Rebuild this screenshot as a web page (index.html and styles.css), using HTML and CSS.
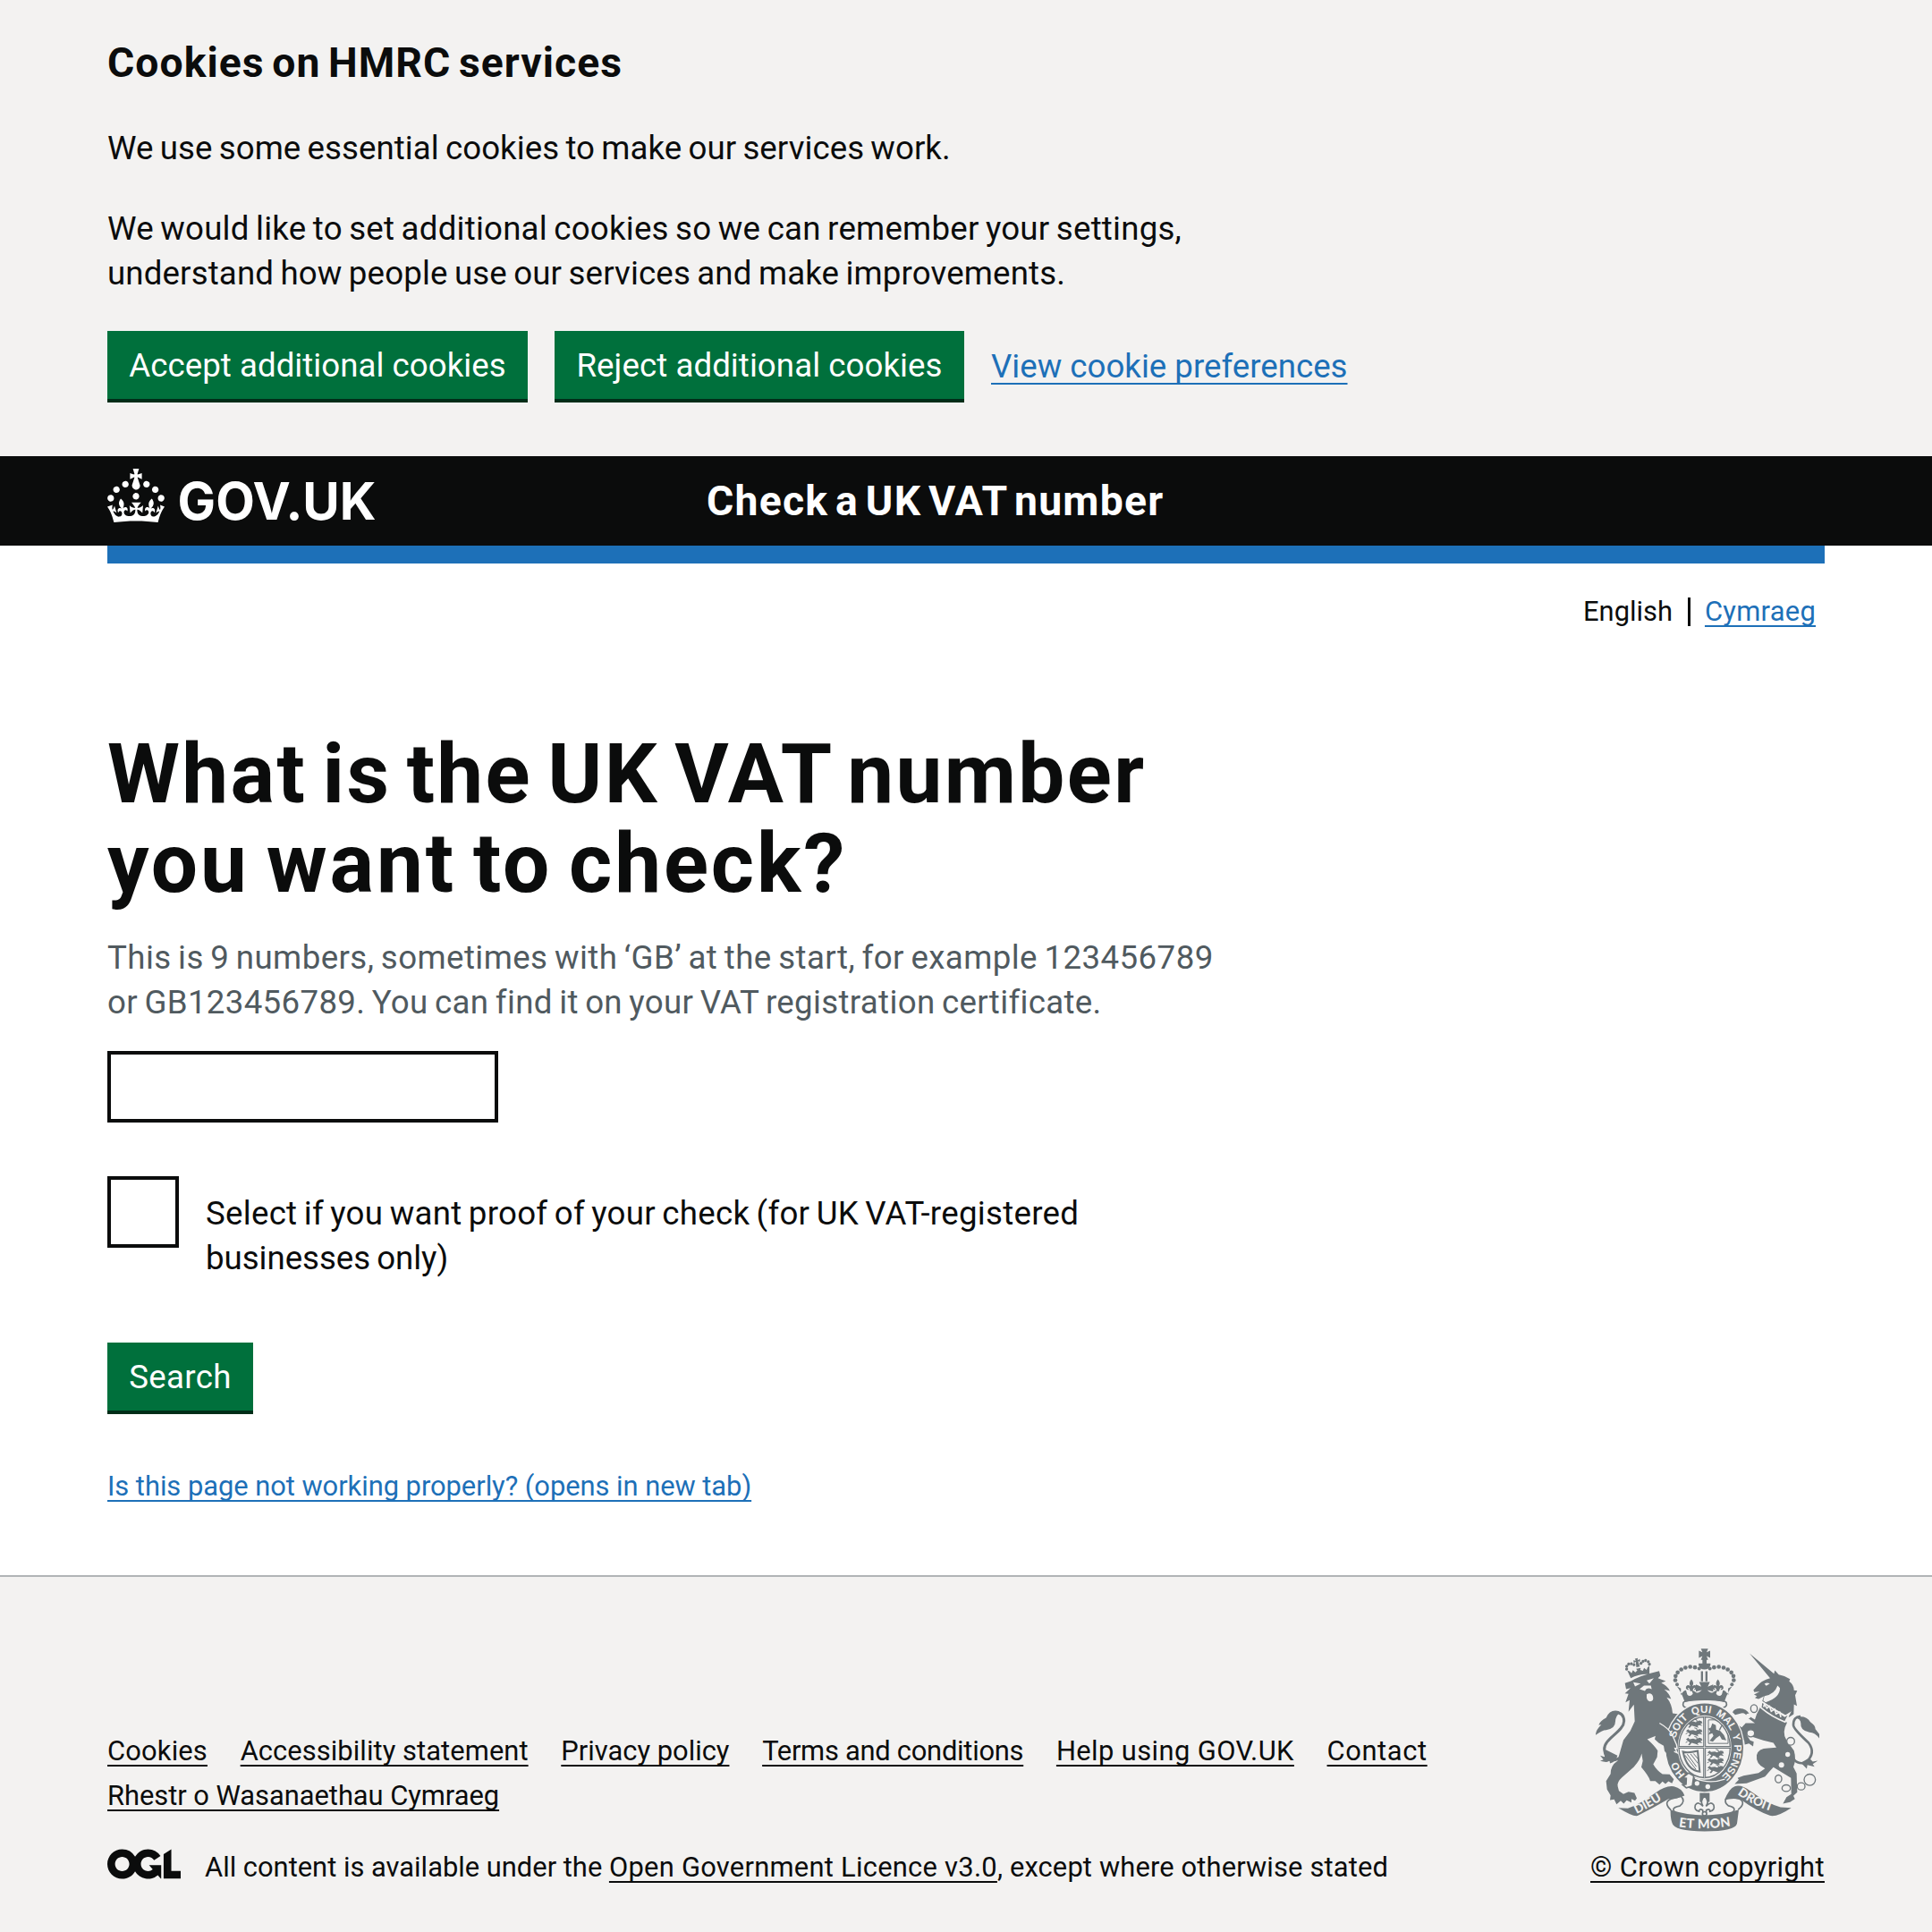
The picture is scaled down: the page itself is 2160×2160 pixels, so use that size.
FILE: index.html
```html
<!DOCTYPE html>
<html lang="en">
<head>
<meta charset="utf-8">
<title>What is the UK VAT number you want to check?</title>
<link rel="stylesheet" href="styles.css">
</head>
<body>
<section class="cookie-banner">
  <div class="container">
    <h2 class="cookie-title">Cookies on HMRC services</h2>
    <p class="cookie-text essential">We use some essential cookies to make our services work.</p>
    <p class="cookie-text">We would like to set additional cookies so we can remember your settings,<br><span class="cookie-two">understand how people use our services and make improvements.</span></p>
    <div class="button-group">
      <button class="button accept">Accept additional cookies</button>
      <button class="button reject">Reject additional cookies</button>
      <a class="link large" href="#">View cookie preferences</a>
    </div>
  </div>
</section>
<header class="header">
  <div class="container header-row">
    <svg class="logo" viewBox="0 0 150 30" role="img" aria-label="GOV.UK">
      <path fill="#fff" d="M22.6 10.4c-1 .4-2-.1-2.4-1-.4-.9.1-2 1-2.4.9-.4 2 .1 2.4 1s-.1 2-1 2.4m-5.9 6.7c-.9.4-2-.1-2.4-1-.4-.9.1-2 1-2.4.9-.4 2 .1 2.4 1s-.1 2-1 2.4m10.8-3.7c-1 .4-2-.1-2.4-1-.4-.9.1-2 1-2.4.9-.4 2 .1 2.4 1s0 2-1 2.4m3.3 4.8c-1 .4-2-.1-2.4-1-.4-.9.1-2 1-2.4.9-.4 2 .1 2.4 1s-.1 2-1 2.4M17 4.7l2.3 1.2V2.5l-2.3.7-.2-.2.9-3h-3.4l.9 3-.2.2c-.1.1-2.3-.7-2.3-.7v3.4L15 4.7c.1.1.1.2.2.2l-1.3 4c-.1.2-.1.4-.1.6 0 1.1.8 2 1.9 2.2h.7c1-.2 1.9-1.1 1.9-2.1 0-.2 0-.4-.1-.6l-1.3-4c-.1-.2 0-.2.1-.3m-7.6 5.7c.9.4 2-.1 2.4-1 .4-.9-.1-2-1-2.4-.9-.4-2 .1-2.4 1s0 2 1 2.4m-5 3c.9.4 2-.1 2.4-1 .4-.9-.1-2-1-2.4-.9-.4-2 .1-2.4 1s.1 2 1 2.4m-3.2 4.8c.9.4 2-.1 2.4-1 .4-.9-.1-2-1-2.4-.9-.4-2 .1-2.4 1s0 2 1 2.4m14.8 11c4.4 0 8.6.3 12.3.8 1.1-4.5 2.4-7 3.7-8.8l-2.5-.9c.2 1.3.3 1.9 0 2.7-.4-.4-.8-1.1-1.1-2.3l-1.2 4c.7-.5 1.3-.8 2-.9-1.1 2.5-2.6 3.1-3.5 3-1.1-.2-1.7-1.2-1.5-2.1.3-1.2 1.5-1.5 2.1-.1 1.1-2.3-.8-3-2-2.3 1.9-1.9 2.1-3.5.6-5.6-2.1 1.6-2.1 3.2-1.2 5.5-1.2-1.4-3.2-.6-2.5 1.6.9-1.4 2.1-.5 1.9.8-.2 1.1-1.7 2.1-3.5 1.9-2.7-.2-2.9-2.1-2.9-3.6.7-.1 1.9.5 2.9 1.9l.4-4.3c-1.1 1.1-2.1 1.4-3.2 1.4.4-1.2 2.1-3 2.1-3h-5.4s1.7 1.9 2.1 3c-1.1 0-2.1-.2-3.2-1.4l.4 4.3c1-1.4 2.2-2 2.9-1.9-.1 1.5-.2 3.4-2.9 3.6-1.9.2-3.4-.8-3.5-1.9-.2-1.3 1-2.2 1.9-.8.7-2.3-1.2-3-2.5-1.6.9-2.2.9-3.9-1.2-5.5-1.5 2-1.3 3.7.6 5.6-1.2-.7-3.1 0-2 2.3.6-1.4 1.8-1.1 2.1.1.2.9-.3 1.9-1.5 2.1-.9.2-2.4-.5-3.5-3 .6 0 1.2.3 2 .9l-1.2-4c-.3 1.1-.7 1.9-1.1 2.3-.3-.8-.2-1.4 0-2.7l-2.9.9C1.3 23 2.6 25.5 3.7 30c3.7-.5 7.9-.8 12.3-.8"/>
      <text class="wordmark" x="39.3" y="28.4" textLength="111" lengthAdjust="spacingAndGlyphs">GOV.UK</text>
    </svg>
    <span class="service-name">Check a UK VAT number</span>
  </div>
</header>
<div class="container"><div class="blue-bar"></div></div>
<main class="container main">
  <nav class="languages"><span class="english">English</span><a class="link cymraeg" href="#">Cymraeg</a></nav>
  <h1 class="heading"><span class="line-one">What is the UK VAT number</span><br><span class="line-two">you want to check?</span></h1>
  <p class="hint">This is 9 numbers, sometimes with ‘GB’ at the start, for example 123456789<br><span class="hint-two">or GB123456789. You can find it on your VAT registration certificate.</span></p>
  <input class="vat-input" type="text" aria-label="UK VAT number">
  <label class="check-row">
    <input class="checkbox" type="checkbox">
    <span class="check-label">Select if you want proof of your check (for UK VAT-registered<br><span class="label-two">businesses only)</span></span>
  </label>
  <button class="button search">Search</button>
  <a class="link problem" href="#">Is this page not working properly? (opens in new tab)</a>
</main>
<footer class="footer">
  <div class="container footer-row">
    <div class="footer-main">
      <nav class="footer-links">
        <a class="w1" href="#">Cookies</a><a class="w2" href="#">Accessibility statement</a><a class="w3" href="#">Privacy policy</a><a class="w4" href="#">Terms and conditions</a><a class="w5" href="#">Help using GOV.UK</a><a class="w6" href="#">Contact</a><a class="w7" href="#">Rhestr o Wasanaethau Cymraeg</a>
      </nav>
      <div class="licence">
        <svg class="ogl" viewBox="0 0 483.2 195.7" aria-hidden="true"><path fill="#0b0c0c" d="M421.5 142.8V.1l-50.7 32.3v161.1h112.4v-50.7zm-122.3-9.6A47.12 47.12 0 0 1 221 97.8c0-26 21.1-47.1 47.1-47.1 16.7 0 31.4 8.7 39.7 21.8l42.7-27.2A97.63 97.63 0 0 0 268.1 0c-36.5 0-68.3 20.1-85.1 49.7A98 98 0 0 0 97.8 0C43.9 0 0 43.9 0 97.8s43.9 97.8 97.8 97.8c36.5 0 68.3-20.1 85.1-49.7a97.76 97.76 0 0 0 149.6 25.4l19.4 22.2h3v-87.8h-80l24.3 27.5zM97.8 145c-26 0-47.1-21.1-47.1-47.1s21.1-47.1 47.1-47.1 47.1 21.1 47.1 47.1S123.8 145 97.8 145"/></svg>
        <span class="licence-text">All content is available under the <a class="ogl-link" href="#">Open Government Licence v3.0</a><span class="tail">, except where otherwise stated</span></span>
      </div>
    </div>
    <div class="copyright">
      <svg class="arms" viewBox="72 68 750 614" aria-hidden="true">
        <defs>
          <path id="garter" d="M437 517C382 517 337 465 337 400S382 283 437 283 537 335 537 400 492 517 437 517"/>
          <path id="dieu" d="M209 622Q266 595 322 557"/>
          <path id="etmon" d="M350 665Q437 678 530 662"/>
          <path id="droit" d="M547 556Q607 600 684 620"/>
          <g id="fleur"><path d="M0-19Q11-7 3 4 14-4 18 6q3 10-9 11 0-5 4-7-7-3-9 11h-8q-2-14-9-11 4 2 4 7-12-1-9-11 4-10 15-2-8-11 3-23Z"/></g>
          <g id="passant"><path d="M1 8 8 2 13 7 25 5 34 8 45 2 53 4 56 11 49 13 56 20 45 18 39 21 44 27 33 23 20 19 13 27 8 25 14 18 7 13Z"/><path d="M38 8 37 0 29-2M6 15 0 18" fill="none" stroke="#6f777b" stroke-width="3"/></g>
          <clipPath id="shield"><ellipse cx="437" cy="399" rx="88" ry="103"/></clipPath>
        </defs>
        <g fill="#6f777b">
          <!-- royal crown -->
          <path d="M425 68h24l-5 12 12-5v24l-12-6 5 13h-24l5-13-12 6V75l12 5zM430 103h14v15h13v5q-4 15-20 15t-20-15v-5h13z"/>
          <path d="M425 144h7v34h-7zM440 144h7v34h-7z"/>
          <path d="M344 194L358 202 357 224Q367 208 375 208L379 222Q388 232 398 220L394 206 405 212Q412 220 422 212L428 207 408 212 408 188 426 196 419 180H455L448 196 466 188V212L446 207 452 212Q462 220 469 212L480 206 476 220Q486 232 495 222L499 208Q507 208 517 224L516 202 530 194Q514 214 504 245L510 248Q437 234 364 248L370 245Q360 214 344 194Z"/>
          <use href="#fleur" x="393" y="190"/><use href="#fleur" x="482" y="190"/>
          <circle cx="419" cy="135" r="6"/><circle cx="405" cy="131" r="7"/><circle cx="389" cy="129" r="7"/><circle cx="373" cy="132" r="7"/><circle cx="359" cy="138" r="7"/><circle cx="347" cy="148" r="7"/><circle cx="340" cy="160" r="7"/><circle cx="339" cy="174" r="7"/><circle cx="345" cy="188" r="6"/>
          <circle cx="455" cy="135" r="6"/><circle cx="469" cy="131" r="7"/><circle cx="485" cy="129" r="7"/><circle cx="501" cy="132" r="7"/><circle cx="515" cy="138" r="7"/><circle cx="527" cy="148" r="7"/><circle cx="534" cy="160" r="7"/><circle cx="535" cy="174" r="7"/><circle cx="529" cy="188" r="6"/>
          <path d="M378 267q-17-3-12-18 4-9 71-10t73 10q5 14-12 18" fill="none" stroke="#6f777b" stroke-width="5"/>
          <!-- lion -->
          <g transform="translate(219 152) rotate(-12)">
            <path d="M-32 9-38-19-30-14-26-7-19-16-13-7-5-12-8-18H8l-3 6 8 5 6-9 7 9 4-7 8-5-6 28Q0-1-32 9ZM-5-52H5L3-45l8-3v9l-7-3 2 19h-12l2-19-7 3v-9l8 3Z"/>
            <g><circle cx="-39" cy="-24" r="5"/><circle cx="-37" cy="-33" r="5"/><circle cx="-29" cy="-39" r="5"/><circle cx="-20" cy="-38" r="5"/><circle cx="-12" cy="-33" r="5"/><circle cx="39" cy="-24" r="5"/><circle cx="37" cy="-33" r="5"/><circle cx="29" cy="-39" r="5"/><circle cx="20" cy="-38" r="5"/><circle cx="12" cy="-33" r="5"/></g>
          </g>
          <path d="M170 184L190 177Q220 158 285 143L289 159 281 167 307 177 292 183Q312 192 321 210L302 205Q318 218 325 237L310 232Q328 254 330 285L350 288 334 314 322 336 300 350 245 372Q268 392 280 410L278 432 265 456Q278 478 296 489L320 490 334 506 328 520 316 513 306 522 296 514 286 524 272 512 255 512Q250 495 225 466L230 445 226 420Q222 440 200 465L160 500Q143 515 146 530L150 545 165 556 182 548 202 552 210 570 204 578 192 572 192 584 176 577 166 588 156 578 142 590 134 574 120 576 122 560 110 540 107 512 122 488Q122 460 145 445L165 375 188 344 203 312 200 256 182 280 186 241 172 248 182 220 170 218 189 200 174 204Z"/>
          <path d="M152 435Q108 459 101 407C98 370 166 347 167 311q-1-29-29-29" fill="none" stroke="#6f777b" stroke-width="9"/>
          <path d="M151 278q-31-9-44 22-20 10-25 24l9-1q-20 19-19 35 21-17 35-17 31-4 31-29 1-18 13-27zM103 406l-1 25-15-4 11 13-11 5q29 8 31-3l2 11q21-6 25-26z"/>
          <!-- unicorn -->
          <path d="M588 84L670 152 673 141 686 155Q705 158 724 170L721 178Q737 190 737 208L748 209 741 224 747 260 737 255 736 288 721 298 630 246 636 228 618 237 606 233 613 227 603 222 622 212 604 214 601 207 612 195Q628 174 657 167Z"/>
          <path d="M626 260Q668 300 714 316Q695 350 712 375L737 410Q746 440 735 465L746 487 748 550 735 562 740 572 724 583 700 588 712 566 728 556 727 502 668 466Q655 480 640 497L578 520 538 522 552 508 548 502 568 494 618 485 640 470Q608 455 612 425 617 403 650 402L678 400 668 384 634 376 604 366 578 357 590 376 602 380 600 396 586 386 572 390 570 375 556 371 542 345 548 323 562 332 575 318 606 318 582 300Q574 282 560 285L540 290 531 281Q540 265 566 270 585 276 592 298L606 306 612 288Z"/>
          <path d="M721 405q13 55 54 46 38-31 11-67-52-48-51-60 0-29 24-28" fill="none" stroke="#6f777b" stroke-width="8"/>
          <path d="M740 300q35-12 52 14 17 11 17 24l13 17v14q-14-19-33-20-32-6-29-30 0-16-20-19zM788 435l12 12 17-3-17 11 6 9-24-6-2 13-20-20z"/>
          <g fill="#f3f2f1" stroke="#6f777b" stroke-width="4"><ellipse cx="603" cy="269" rx="11" ry="13"/><ellipse cx="592" cy="352" rx="13" ry="12"/><circle cx="726" cy="379" r="13"/><ellipse cx="685" cy="505" rx="11" ry="13"/><ellipse cx="711" cy="536" rx="14" ry="11"/><ellipse cx="761" cy="530" rx="13" ry="12"/><circle cx="790" cy="508" r="19"/></g>
          <g fill="#f3f2f1"><circle cx="584" cy="294" r="8"/><circle cx="695" cy="458" r="9"/><circle cx="716" cy="423" r="8"/></g>
        </g>
        <!-- face and collar highlights -->
        <g fill="#f3f2f1"><path d="M198 181l25 4-19 10zM243 175l24-8-15 18zM219 204l15-12h23l3 12q-17-8-23 6zM243 221q15-8 21 7 4 17-10 17-13-2-11-24zM638 186q8-6 18-1l-12 8zM638 227Q672 222 682 192L690 200Q690 232 642 248L634 242Z"/></g>
        <path d="M629 246l77 49 16-10-15 29q-45-17-81-48z" fill="#6f777b" stroke="#f3f2f1" stroke-width="5"/>
        <path d="M635 264l3-10 8 14 9-7 6 17 11-7 5 16 12-6 4 17" fill="none" stroke="#f3f2f1" stroke-width="5"/>
        <!-- garter and shield -->
        <ellipse cx="437" cy="400" rx="109" ry="128" fill="#f3f2f1" stroke="#f3f2f1" stroke-width="49"/>
        <ellipse cx="437" cy="400" rx="110" ry="128" fill="none" stroke="#6f777b" stroke-width="40"/>
        <ellipse cx="437" cy="399" rx="86" ry="102" fill="none" stroke="#6f777b" stroke-width="4"/>
        <g clip-path="url(#shield)" fill="#6f777b">
          <path d="M437 296v207M350 399h175" stroke="#6f777b" stroke-width="9"/><path d="M437 296v207M350 399h175" stroke="#f3f2f1" stroke-width="2"/>
          <use href="#passant" x="374" y="307"/><use href="#passant" x="374" y="336"/><use href="#passant" x="374" y="365"/>
          <use href="#passant" x="446" y="408"/><use href="#passant" x="446" y="433"/><use href="#passant" x="446" y="459"/>
          <path d="M450 307h66v79h-66z" fill="none" stroke="#6f777b" stroke-width="3"/>
          <path d="M463 319l12 6 1 15 14 4 12 14 8 18-15-3-7-13-12 8-11 12-11-3 13-16-4-9-14 5 7-12-7-8 9-4z"/><path d="M487 342q10-25 18-17l5 10" fill="none" stroke="#6f777b" stroke-width="4"/>
          <path d="M365 414q16 6 49-3l7 70q-44-6-56-67z" fill="none" stroke="#6f777b" stroke-width="6"/><path d="M379 422l31 42M390 421l25 32M371 425l37 48M400 420l16 19" stroke="#6f777b" stroke-width="3"/>
        </g>
        <!-- paw, buckle and studs over the garter -->
        <path d="M283 318L318 342Q332 362 340 388L342 402 334 398 343 414 331 408 334 422 318 412 314 424 303 412 300 394 283 384 270 372Z" fill="#6f777b"/>
        <path d="M286 318Q318 336 329 358L343 390 345 403 338 402 346 418 335 413" fill="none" stroke="#f3f2f1" stroke-width="4"/>
        <g class="motto">
          <text><textPath href="#garter" startOffset="10.5%">HO</textPath></text>
          <text><textPath href="#garter" startOffset="29.5%">SOIT</textPath></text>
          <text><textPath href="#garter" startOffset="44%">QUI</textPath></text>
          <text><textPath href="#garter" startOffset="55.5%">MAL</textPath></text>
          <text><textPath href="#garter" startOffset="68.5%">Y</textPath></text>
          <text><textPath href="#garter" startOffset="73.5%">PENSE</textPath></text>
        </g>
        <path d="M384 485l17 10-5 34-20 6-12-10 11-2 1-20-12-2z" fill="#f3f2f1" stroke="#6f777b" stroke-width="5"/>
        <path d="M405 503q48 21 100 3" fill="none" stroke="#f3f2f1" stroke-width="4"/>
        <g fill="#f3f2f1"><circle cx="412" cy="520" r="8"/><circle cx="448" cy="531" r="8"/></g>
        <!-- scroll -->
        <path d="M421 552h33v30h-33z" fill="#6f777b"/>
        <g fill="#f3f2f1" stroke="#6f777b" stroke-width="5"><path d="M437 562q18 17 5 35 17-19 26-4 5 17-13 21 1-11-12-4l-1 17h-10l-1-17q-12-7-12 4-18-4-13-21 9-15 26 4-12-18 5-35z"/><circle cx="437" cy="622" r="7"/></g>
        <g fill="#6f777b"><path d="M148 602L180 604Q220 590 272 552 306 526 334 530 362 536 370 561L345 570 315 573Q262 604 214 628 200 634 148 602ZM728 602L692 600Q650 588 590 545 560 522 538 530 520 536 504 576 530 568 558 574 610 612 656 628 680 634 728 602ZM323 609Q437 645 552 608L546 655Q540 681 437 681T328 652Q322 634 323 609Z"/></g>
        <g fill="none" stroke="#6f777b" stroke-width="5"><path d="M325 610Q298 585 323 573L358 563Q375 580 354 596 317 603 344 621M550 608Q579 584 552 571L517 564Q497 580 517 595 550 602 528 620"/></g>
        <g class="scroll-text">
          <text><textPath href="#dieu">DIEU</textPath></text>
          <text class="et-mon"><textPath href="#etmon">ET MON</textPath></text>
          <text><textPath href="#droit">DROIT</textPath></text>
        </g>
      </svg>
      <a class="copyright-link" href="#">© Crown copyright</a>
    </div>
  </div>
</footer>
</body>
</html>
```
FILE: styles.css
```css
* { box-sizing: border-box; }
body {
  margin: 0;
  background: #fff;
  color: #0b0c0c;
  font: 400 36.67px/50px Roboto, "Liberation Sans", sans-serif;
}
h1, h2, p { margin: 0; }
.container { margin: 0 120px; }

.cookie-banner { height: 510px; padding-top: 40px; background: #f3f2f1; }
.cookie-title { margin-bottom: 41px; font-size: 46.3px; line-height: 60px; font-weight: 700; letter-spacing: 1.05px; word-spacing: -4px; }
.cookie-text { margin-bottom: 39px; letter-spacing: .22px; word-spacing: -1.9px; }
.cookie-two { letter-spacing: .14px; }
.essential { margin-bottom: 40px; letter-spacing: .05px; }
.button-group { display: flex; gap: 30px; align-items: flex-start; }
.button {
  display: block;
  height: 80px;
  padding: 0 0 2px;
  border: 0;
  border-radius: 0;
  background: #00703c;
  box-shadow: inset 0 -4px #002d18;
  color: #fff;
  font: inherit;
  line-height: 74px;
  text-align: center;
}
.accept { width: 470px; letter-spacing: .04px; }
.reject { width: 458px; letter-spacing: .06px; }
.search { width: 163px; margin-top: 61px; letter-spacing: .3px; }
.link { color: #1d70b8; text-decoration: underline; text-decoration-thickness: 2px; text-underline-offset: 5px; text-decoration-skip-ink: none; }
.large { margin-top: 15px; text-underline-offset: 6px; }

.header { height: 100px; background: #0b0c0c; color: #fff; }
.header-row { display: flex; align-items: flex-start; }
.logo { width: 300px; height: 60px; margin-top: 14px; overflow: visible; }
.wordmark { fill: #fff; font: 700 28.8px Inter, Roboto, sans-serif; }
.service-name { margin-left: 370px; font-size: 46.3px; line-height: 100px; font-weight: 700; letter-spacing: 1.25px; word-spacing: -5px; }
.blue-bar { height: 20px; background: #1d70b8; }

.main { height: 1131px; }
.languages { display: flex; justify-content: flex-end; padding: 34px 10px 0 0; font-size: 30.88px; line-height: 40px; }
.english { margin-right: 16px; padding-right: 20px; background: linear-gradient(#0b0c0c, #0b0c0c) right 4px / 3px 32px no-repeat; }
.cymraeg { letter-spacing: .27px; }
.heading { margin-top: 112px; font-size: 92.6px; line-height: 100px; font-weight: 700; }
.line-one { letter-spacing: 2.35px; word-spacing: -8px; }
.line-two { letter-spacing: 2.9px; word-spacing: -7px; }
.hint { margin-top: 30px; color: #505a5f; letter-spacing: .42px; word-spacing: -2px; }
.hint-two { letter-spacing: .33px; }
.vat-input { display: block; width: 437px; height: 80px; margin-top: 29px; border: 4px solid #0b0c0c; border-radius: 0; background: #fff; }
.check-row { display: flex; gap: 30px; margin-top: 60px; }
.checkbox { appearance: none; width: 80px; height: 80px; margin: 0; border: 4px solid #0b0c0c; background: #fff; }
.check-label { padding-top: 17px; height: 125px; letter-spacing: .27px; word-spacing: -2px; }
.label-two { letter-spacing: -.04px; }
.problem { display: block; width: max-content; margin-top: 61px; font-size: 30.88px; line-height: 40px; letter-spacing: -.04px; }

.footer { height: 399px; border-top: 2px solid #b1b4b6; background: #f3f2f1; font-size: 30.88px; }
.footer a { color: inherit; text-decoration: underline; text-decoration-thickness: 2px; text-underline-offset: 5px; text-decoration-skip-ink: none; }
.footer-row { display: flex; justify-content: space-between; }
.footer-links { display: flex; flex-wrap: wrap; column-gap: 36.7px; width: 1500px; padding-top: 170px; }
.w1 { letter-spacing: .17px; }
.w2 { letter-spacing: .07px; }
.w4 { letter-spacing: -.26px; }
.w5 { letter-spacing: .4px; }
.w6 { letter-spacing: .6px; }
.w7 { letter-spacing: -.04px; }
.licence { display: flex; margin-top: 30px; }
.ogl { width: 82px; height: 34px; margin: 4px 27px 0 0; }
.ogl-link { letter-spacing: .26px; }
.tail { letter-spacing: .14px; }
.copyright { display: flex; flex-direction: column; align-items: center; width: 262px; padding-top: 80px; }
.arms { width: 250px; height: 205px; margin-bottom: 15px; }
.copyright-link { white-space: nowrap; letter-spacing: .37px; }
.motto { fill: #f3f2f1; font: 700 35px "Liberation Sans", sans-serif; }
.scroll-text { fill: #f3f2f1; font: 900 41px Lato, sans-serif; }
.et-mon { font-size: 43px; letter-spacing: 1.5px; }
```
